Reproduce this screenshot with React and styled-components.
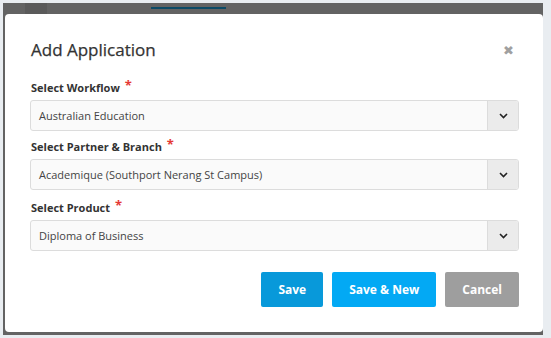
import React from 'react'
import styled, { createGlobalStyle } from 'styled-components'

const GlobalStyle = createGlobalStyle`
  * { box-sizing: border-box; }
  html, body { margin: 0; padding: 0; }
  body {
    background: #e9edf1;
    font-family: "Open Sans", "Noto Sans", sans-serif;
    color: #333;
  }
`

const Frame = styled.div`
  width: 551px;
  height: 338px;
  padding: 3px 8px 3px 3px;
`

const Overlay = styled.div`
  height: 100%;
  background: #636363;
  display: flex;
  flex-direction: column;
  padding: 0 0 3px 2px;
`

const BehindBar = styled.div`
  height: 11px;
  flex-shrink: 0;
  display: flex;
  align-items: flex-start;
`

const BehindTab = styled.div`
  margin-left: 20px;
  width: 22px;
  height: 11px;
  background: #5a5a5a;
`

const BehindUnderline = styled.div`
  margin-left: 104px;
  margin-top: 4px;
  width: 75px;
  height: 2px;
  background: #0b4a66;
`

const Modal = styled.div`
  flex: 1;
  background: #fff;
  border-radius: 4px;
  padding: 24px 24px 0 26px;
`

const Header = styled.div`
  display: flex;
  align-items: center;
  justify-content: space-between;
  margin-bottom: 18px;
`

const Title = styled.h2`
  margin: 0;
  font-size: 17px;
  font-weight: 400;
  line-height: 24px;
  color: #333;
  -webkit-text-stroke: 0.25px #333;
`

const Close = styled.button`
  border: 0;
  background: none;
  padding: 0;
  margin-right: 5px;
  color: #a0a0a0;
  font-size: 13px;
  font-weight: 700;
  line-height: 1;
  font-family: "DejaVu Sans", sans-serif;
  cursor: pointer;
`

const Field = styled.div`
  margin-bottom: ${({ $gap }) => $gap}px;
`

const Label = styled.label`
  display: block;
  height: 16px;
  font-size: 11px;
  font-weight: 700;
  color: #333;
  line-height: 16px;
  margin-bottom: 4px;
`

const Star = styled.span`
  color: #e53935;
  margin-left: 5px;
  font-size: 13px;
  line-height: 0;
  position: relative;
  top: -2px;
`

const SelectBox = styled.div`
  display: flex;
  height: 31px;
  margin-left: -1px;
  border: 1px solid #dcdcdc;
  border-radius: 3px;
  background: #fafafa;
  overflow: hidden;
`

const Value = styled.div`
  flex: 1;
  display: flex;
  align-items: center;
  padding-left: 8px;
  font-size: 11px;
  color: #444;
`

const Caret = styled.div`
  width: 31px;
  display: flex;
  align-items: center;
  justify-content: center;
  background: #ebebeb;
  border-left: 1px solid #dcdcdc;
`

const Actions = styled.div`
  display: flex;
  justify-content: flex-end;
  gap: 9px;
  margin-top: 21px;
`

const Button = styled.button`
  height: 35px;
  padding: 0 ${({ $pad }) => $pad}px;
  border: 0;
  border-radius: 2px;
  background: ${({ $bg }) => $bg};
  color: #fff;
  font-family: "Open Sans", sans-serif;
  font-size: 12px;
  font-weight: 700;
  cursor: pointer;
`

const Chevron = () => (
  <svg width="9" height="6" viewBox="0 0 9 6">
    <path d="M1 1l3.5 3.5L8 1" fill="none" stroke="#222" strokeWidth="1.6" />
  </svg>
)

const fields = [
  { label: 'Select Workflow', value: 'Australian Education', gap: 8 },
  { label: 'Select Partner & Branch', value: 'Academique (Southport Nerang St Campus)', gap: 10 },
  { label: 'Select Product', value: 'Diploma of Business', gap: 0 },
]

const App = () => {
  return (
    <>
      <GlobalStyle />
      <Frame>
        <Overlay>
          <BehindBar>
            <BehindTab />
            <BehindUnderline />
          </BehindBar>
          <Modal>
            <Header>
              <Title>Add Application</Title>
              <Close>✖</Close>
            </Header>
            {fields.map((f) => (
              <Field key={f.label} $gap={f.gap}>
                <Label>
                  {f.label}
                  <Star>*</Star>
                </Label>
                <SelectBox>
                  <Value>{f.value}</Value>
                  <Caret>
                    <Chevron />
                  </Caret>
                </SelectBox>
              </Field>
            ))}
            <Actions>
              <Button $bg="#0899da" $pad={17}>Save</Button>
              <Button $bg="#03a9f4" $pad={17}>Save &amp; New</Button>
              <Button $bg="#9e9e9e" $pad={17}>Cancel</Button>
            </Actions>
          </Modal>
        </Overlay>
      </Frame>
    </>
  )
}

export default App
